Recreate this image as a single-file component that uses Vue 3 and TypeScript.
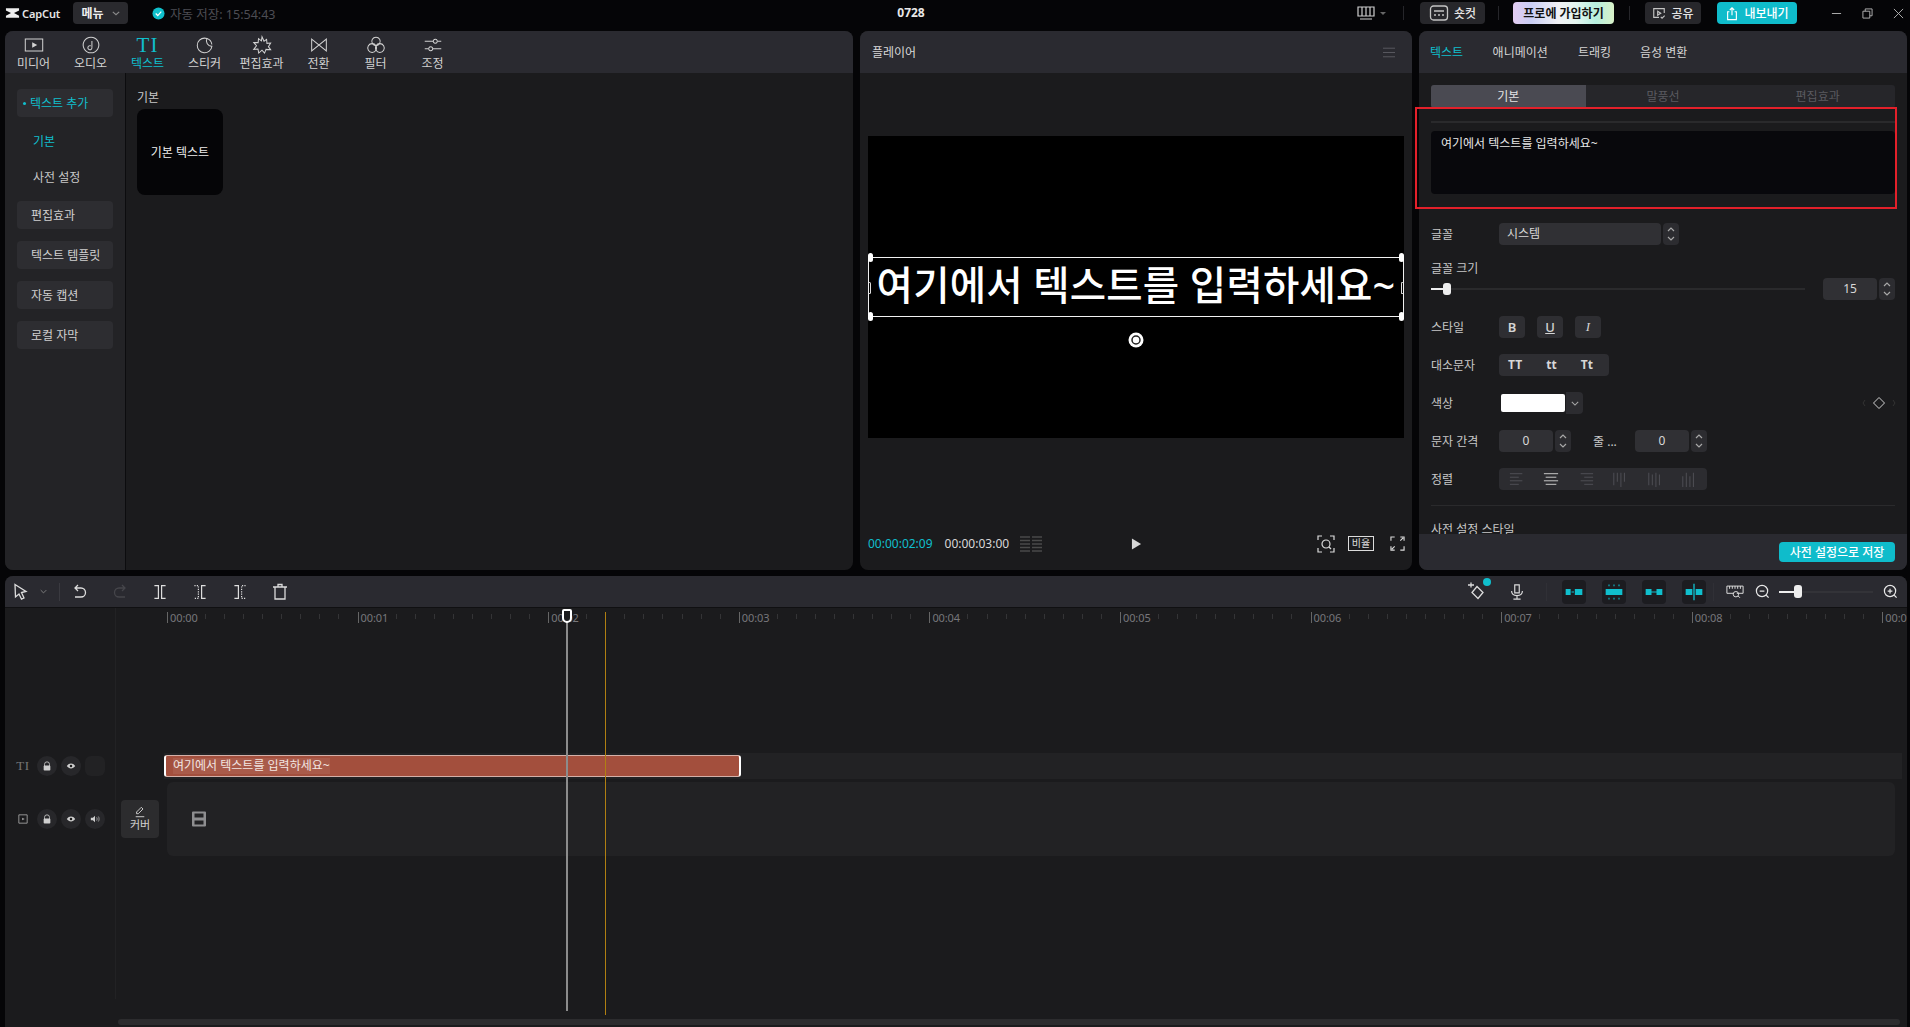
<script setup lang="ts">
interface NavItem { label: string; paths?: string[]; solid?: string[]; active?: boolean; glyph?: string }
const nav: NavItem[] = [
  { label: '미디어', paths: ['M2.5 5.5h19v13h-19z'], solid: ['M10 9l5.5 3-5.5 3z'] },
  { label: '오디오', paths: ['M12 3.5a8.5 8.5 0 1 0 .01 0z', 'M13 7.5v7.5', 'M13 15a2.2 2.2 0 1 1-1.2-2'] },
  { label: '텍스트', glyph: 'TI', active: true },
  { label: '스티커', paths: ['M19.5 13.5a8 8 0 1 1-8-9c1 0 1.8.1 2.6.4a6 6 0 0 0 5.4 8.6z', 'M14.1 4.9c3 1 5 3.6 5.4 6.5'] },
  { label: '편집효과', paths: ['M12 3l2.200 4.800 2.800-2 .4 4.400 4-.4-2.400 4 2.400 3.400-5-.4-1.600 4-2.800-3.200-3.600 3.200-.8-4.400-4.600.4 3-4-3-3.600 4.800.2.400-4.400 3.200 2.400z'] },
  { label: '전환', paths: ['M4 5.5l16 13V5.5l-16 13z'] },
  { label: '필터', paths: ['M12 3.5a4.6 4.6 0 1 0 .01 0z', 'M7.8 10.5a4.8 4.8 0 1 0 .01 0z', 'M16.2 10.5a4.8 4.8 0 1 0 .01 0z'] },
  { label: '조정', paths: ['M3 8h9', 'M17 8h4', 'M14.5 5.8a2.2 2.2 0 1 0 .01 0z', 'M3 16h4', 'M12 16h9', 'M9.5 13.8a2.2 2.2 0 1 0 .01 0z'] },
]
const sideButtons = ['편집효과', '텍스트 템플릿', '자동 캡션', '로컬 자막']
const rightTabs = ['애니메이션', '트래킹', '음성 변환']
const seconds = Array.from({ length: 10 }, (_, i) => `00:0${i}`)
const alignIcons = [
  ['M2 3h14', 'M2 7h10', 'M2 11h14', 'M2 15h10'],
  ['M2 3h16', 'M4 7h12', 'M2 11h16', 'M4 15h12'],
  ['M4 3h14', 'M8 7h10', 'M4 11h14', 'M8 15h10'],
  ['M3 2v14', 'M7 2v10', 'M11 2v16', 'M15 2v10'],
  ['M3 2v14', 'M7 4v12', 'M11 2v16', 'M15 4v12'],
  ['M3 6v12', 'M7 2v16', 'M11 6v12', 'M15 2v16'],
]
const splitIcons = [
  { solid: 'M3 2h5v16H3M17 2h-5v16h5', dash: '' },
  { solid: 'M17 2h-5v16h5', dash: 'M3 2h5v16H3' },
  { solid: 'M3 2h5v16H3', dash: 'M17 2h-5v16h5' },
]
const snapIcons = [
  { fill: ['M2 8.500h6v7H2z', 'M13 8.500h9v7h-9z'], line: ['M9 12h3'] },
  { fill: ['M2 8.500h20v7H2z'], line: ['M6 5V3M12 5V3M18 5V3M6 19v2M12 19v2M18 19v2'] },
  { fill: ['M2 8.500h7v7H2z', 'M15 8.500h7v7h-7z'], line: ['M8 12h8'] },
  { fill: ['M2 8.500h8v7H2z', 'M14 8.500h8v7h-8z', 'M11.200 2h1.600v20h-1.600z'], line: [] },
]
</script>

<template>
  <div class="app">
    <header class="topbar">
      <div class="logo">
        <svg class="logo-mark" viewBox="0 0 16 12"><path d="M1 1h14v2.2L9.6 6 15 8.8V11H1V8.8L6.4 6 1 3.2z" /></svg>
        <span>CapCut</span>
      </div>
      <button class="menu-btn"><b>메뉴</b><svg viewBox="0 0 10 6"><path d="M1 1l4 3.5L9 1" /></svg></button>
      <svg class="save-check" viewBox="0 0 14 14"><circle cx="7" cy="7" r="6.5" /><path d="M4 7l2.2 2.2L10 5" /></svg>
      <span class="autosave">자동 저장: 15:54:43</span>
      <span class="project">0728</span>
      <div class="top-right">
        <svg class="kbd" viewBox="0 0 18 14"><path d="M1 1h16v9H1zM5 1v9M9 1v9M13 1v9M3 13h12" /></svg>
        <span class="caret"></span>
        <i class="top-sep first"></i>
        <button class="top-btn shortcut">
          <svg viewBox="0 0 20 18"><rect x="1.5" y="2" width="17" height="14" rx="3" /><path d="M5 7h10M5 11h2M9 11h2M13 11h2" /></svg>
          숏컷
        </button>
        <i class="top-sep tight"></i>
        <button class="top-btn pro">프로에 가입하기</button>
        <i class="top-sep"></i>
        <button class="top-btn share">
          <svg viewBox="0 0 16 16"><path d="M14 8V3H2v10h6" /><path d="M6.5 6l3.5 2.2-3.5 2.2z" /><path d="M10 12.5l1.5 1.5 3-3" /></svg>
          공유
        </button>
        <button class="top-btn export">
          <svg viewBox="0 0 16 16"><path d="M5 6H3v9h10V6h-2" /><path d="M8 10V1.5M5.5 4L8 1.5 10.500 4" /></svg>
          내보내기
        </button>
        <div class="win">
          <svg viewBox="0 0 12 12"><path d="M1 6h10" /></svg>
          <svg viewBox="0 0 12 12"><path d="M1 3.500h7.500V11H1zM3.500 3.500V1H11v7.500H8.500" /></svg>
          <svg viewBox="0 0 12 12"><path d="M1 1l10 10M11 1L1 11" /></svg>
        </div>
      </div>
    </header>

    <main class="work">
      <section class="panel media-panel">
        <nav class="nav">
          <div v-for="n in nav" :key="n.label" class="nav-item" :class="{ active: n.active }">
            <span v-if="n.glyph" class="nav-glyph">{{ n.glyph }}</span>
            <svg v-else class="nav-icon" viewBox="0 0 24 24">
              <path v-for="d in n.paths" :key="d" :d="d" />
              <path v-for="d in n.solid" :key="d" :d="d" class="solid" />
            </svg>
            <span class="nav-label">{{ n.label }}</span>
          </div>
        </nav>
        <div class="media-body">
          <aside class="side">
            <div class="side-btn current"><i></i>텍스트 추가</div>
            <div class="side-link on">기본</div>
            <div class="side-link">사전 설정</div>
            <div class="side-stack">
              <div v-for="b in sideButtons" :key="b" class="side-btn">{{ b }}</div>
            </div>
          </aside>
          <div class="library">
            <div class="lib-title">기본</div>
            <div class="text-card">기본 텍스트</div>
          </div>
        </div>
      </section>

      <section class="panel player">
        <div class="player-head">
          <span>플레이어</span>
          <svg viewBox="0 0 14 12"><path d="M0 1h14M0 6h14M0 11h14" /></svg>
        </div>
        <div class="player-stage">
          <div class="video">
            <div class="selbox">
              <span class="sel-text">여기에서 텍스트를 입력하세요~</span>
              <i class="h tl"></i><i class="h tr"></i><i class="h bl"></i><i class="h br"></i>
              <i class="h ml"></i><i class="h mr"></i>
            </div>
            <svg class="rotate" viewBox="0 0 16 16"><circle cx="8" cy="8" r="7.500" fill="#fff" /><circle cx="8" cy="8" r="4" fill="none" stroke="#222" stroke-width="1.500" /><circle cx="8" cy="8" r="1.500" fill="#fff" /></svg>
          </div>
        </div>
        <div class="player-foot">
          <span class="t-cur">00:00:02:09</span>
          <span class="t-dur">00:00:03:00</span>
          <svg class="meter" viewBox="0 0 22 16"><path d="M0 1h10M12 1h10M0 4.500h10M12 4.500h10M0 8h10M12 8h10M0 11.500h10M12 11.500h10M0 15h10M12 15h10" /></svg>
          <svg class="play" viewBox="0 0 12 14"><path d="M1 1l10 6-10 6z" /></svg>
          <svg class="foot-ic focus" viewBox="0 0 18 18"><path d="M1 5V1h4M13 1h4v4M17 13v4h-4M5 17H1v-4" /><circle cx="9" cy="9" r="4" /><path d="M12 12l2 2" /></svg>
          <span class="ratio">비율</span>
          <svg class="foot-ic full" viewBox="0 0 16 16"><path d="M1 5V1h4M11 1h4v4M15 11v4h-4M5 15H1v-4M11 5l3-3M5 11l-3 3" /></svg>
        </div>
      </section>

      <section class="panel props">
        <div class="prop-tabs">
          <span class="on">텍스트</span>
          <span v-for="t in rightTabs" :key="t">{{ t }}</span>
        </div>
        <div class="prop-scroll">
          <div class="subtabs">
            <span class="sel">기본</span><span>말풍선</span><span>편집효과</span>
          </div>
          <div class="rule"></div>
          <div class="textarea">여기에서 텍스트를 입력하세요~</div>
          <div class="rows">
            <div class="row">
              <label>글꼴</label>
              <div class="select">시스템</div>
              <span class="spin"><svg viewBox="0 0 10 16"><path d="M2 5l3-3 3 3M2 11l3 3 3-3" /></svg></span>
            </div>
            <div class="size-block">
              <label>글꼴 크기</label>
              <div class="row">
                <div class="slider"><i class="fill"></i><i class="thumb"></i></div>
                <div class="num wide">15</div>
                <span class="spin"><svg viewBox="0 0 10 16"><path d="M2 5l3-3 3 3M2 11l3 3 3-3" /></svg></span>
              </div>
            </div>
            <div class="row">
              <label>스타일</label>
              <div class="styles">
                <span class="sq bold">B</span><span class="sq under">U</span><span class="sq ital">I</span>
              </div>
            </div>
            <div class="row">
              <label>대소문자</label>
              <div class="cases"><span>TT</span><span>tt</span><span>Tt</span></div>
            </div>
            <div class="row">
              <label>색상</label>
              <div class="swatch"></div>
              <span class="drop"><svg viewBox="0 0 10 6"><path d="M1 1l4 4 4-4" /></svg></span>
              <svg class="key" viewBox="0 0 34 14"><path d="M3 4L1 7l2 3M31 4l2 3-2 3" class="dim" /><path d="M17 1.500L22.500 7 17 12.500 11.500 7z" /></svg>
            </div>
            <div class="row">
              <label>문자 간격</label>
              <div class="num">0</div>
              <span class="spin"><svg viewBox="0 0 10 16"><path d="M2 5l3-3 3 3M2 11l3 3 3-3" /></svg></span>
              <label class="short">줄 ...</label>
              <div class="num">0</div>
              <span class="spin"><svg viewBox="0 0 10 16"><path d="M2 5l3-3 3 3M2 11l3 3 3-3" /></svg></span>
            </div>
            <div class="row">
              <label>정렬</label>
              <div class="aligns">
                <svg v-for="(a, i) in alignIcons" :key="i" :class="{ on: i === 1 }" viewBox="0 0 20 18">
                  <path v-for="d in a" :key="d" :d="d" />
                </svg>
              </div>
            </div>
          </div>
          <div class="divider"></div>
          <div class="preset-title">사전 설정 스타일</div>
        </div>
        <div class="prop-foot"><button>사전 설정으로 저장</button></div>
      </section>
      <div class="highlight"></div>
    </main>

    <section class="timeline">
      <div class="tl-bar">
        <svg class="tool cursor" viewBox="0 0 16 18"><path d="M2 1.500l11 7-4.500 1 2.500 5.500-2.500 1.200L6 11l-3.500 3z" /></svg>
        <svg class="tiny" viewBox="0 0 10 6"><path d="M1 1l4 4 4-4" /></svg>
        <i class="bar-sep"></i>
        <svg class="tool" viewBox="0 0 16 18"><path d="M6 2L3 5l3 3M3 5h6a4.500 4.500 0 0 1 0 9H3" /></svg>
        <svg class="tool dim-ic" viewBox="0 0 16 18"><path d="M10 2l3 3-3 3M13 5H7a4.500 4.500 0 0 0 0 9h6" /></svg>
        <svg v-for="(s, i) in splitIcons" :key="i" class="tool split" viewBox="0 0 20 20">
          <path :d="s.solid" />
          <path v-if="s.dash" :d="s.dash" class="dash" />
        </svg>
        <svg class="tool" viewBox="0 0 16 18"><path d="M3 4h10v12H3zM1 4h14M6 4V1.500h4V4" /></svg>
        <div class="bar-right">
          <span class="ai">
            <svg viewBox="0 0 20 20"><path d="M11 4.500l6 6-5 6-6-6zM2 3h6M5 0.500v5" /></svg>
            <i></i>
          </span>
          <svg class="tool mic" viewBox="0 0 16 20"><path d="M5.500 2h5v9h-5zM2 9c0 3 2 5 6 5s6-2 6-5M8 14v4M4 18h8" /></svg>
          <i class="bar-sep wide left"></i>
          <div class="snaps">
            <span v-for="(s, i) in snapIcons" :key="i" class="snap">
              <svg viewBox="0 0 24 24">
                <path v-for="d in s.fill" :key="d" :d="d" class="sf" />
                <path v-for="d in s.line" :key="d" :d="d" class="sl" />
              </svg>
            </span>
          </div>
          <i class="bar-sep wide right"></i>
          <svg class="tool ruler-ic" viewBox="0 0 20 16"><path d="M1 2h18v8H12M1 2v8h7M4 2v3M7 2v3M10 2v3M13 2v3M16 2v3" /><circle cx="11" cy="11" r="3" /><path d="M13.500 13l2 2" /></svg>
          <svg class="zoomc" viewBox="0 0 16 16"><circle cx="7.500" cy="7.500" r="6" /><path d="M5 7.500h5M12 12l2.500 2.500" /></svg>
          <div class="zoom-track"><i class="zfill"></i><i class="zthumb"></i></div>
          <svg class="zoomc" viewBox="0 0 16 16"><circle cx="7.500" cy="7.500" r="6" /><path d="M5 7.500h5M7.500 5v5M12 12l2.500 2.500" /></svg>
        </div>
      </div>
      <div class="ruler">
        <div v-for="s in seconds" :key="s" class="sec">
          <span class="sec-label">{{ s }}</span>
          <i v-for="n in 8" :key="n" class="tick"></i>
        </div>
      </div>
      <div class="tracks">
        <div class="track text-track">
          <div class="head">
            <span class="tt">TI</span>
            <span class="hb"><svg viewBox="0 0 12 12"><path d="M3 6V4a3 3 0 0 1 6 0v2" fill="none" stroke="#cfcfcf" /><rect x="2" y="5.500" width="8" height="6" rx="1" /></svg></span>
            <span class="hb"><svg viewBox="0 0 12 12"><path d="M1 6c2.500-4 7.500-4 10 0-2.500 4-7.500 4-10 0z" /><circle cx="6" cy="6" r="1.500" fill="#1c1c1c" /></svg></span>
            <span class="hb ghost"></span>
          </div>
          <div class="lane">
            <div class="clip"><span>여기에서 텍스트를 입력하세요~</span></div>
          </div>
        </div>
        <div class="track video-track">
          <div class="head">
            <span class="vi"><svg viewBox="0 0 12 12"><path d="M1 1h10v10H1z" fill="none" stroke="#aaa" /><path d="M5 4.500l3 1.500-3 1.500z" /></svg></span>
            <span class="hb"><svg viewBox="0 0 12 12"><path d="M3 6V4a3 3 0 0 1 6 0v2" fill="none" stroke="#cfcfcf" /><rect x="2" y="5.500" width="8" height="6" rx="1" /></svg></span>
            <span class="hb"><svg viewBox="0 0 12 12"><path d="M1 6c2.500-4 7.500-4 10 0-2.500 4-7.500 4-10 0z" /><circle cx="6" cy="6" r="1.500" fill="#1c1c1c" /></svg></span>
            <span class="hb"><svg viewBox="0 0 12 12"><path d="M1 4.500h2.500L6 2v8L3.500 7.500H1z" /><path d="M8 4c.7 1 .7 3 0 4M10 3c1.200 1.500 1.200 4.500 0 6" fill="none" stroke="#cfcfcf" stroke-width=".8" /></svg></span>
          </div>
          <div class="cover-col">
            <div class="cover">
              <svg viewBox="0 0 14 14"><path d="M8.500 1.500l2 2L5 9H3V7zM2 12.500h10" /></svg>
              <span>커버</span>
            </div>
          </div>
          <div class="video-lane">
            <svg viewBox="0 0 14 16"><path d="M0 1.500a1 1 0 0 1 1-1h12a1 1 0 0 1 1 1v13a1 1 0 0 1-1 1H1a1 1 0 0 1-1-1zM2.500 2.500v4h9v-4zM2.500 9.500v4h9v-4z" fill-rule="evenodd" /></svg>
          </div>
        </div>
      </div>
      <div class="hscroll"></div>
      <div class="head-divider"></div>
      <div class="orange"></div>
      <div class="playhead"><i></i></div>
    </section>
  </div>
</template>

<style scoped>
.app {
  position: relative;
  width: 1910px;
  height: 1027px;
  overflow: hidden;
  background: #050507;
  color: #d8d8d8;
  font-family: "Noto Sans", "Noto Sans CJK KR", sans-serif;
  font-size: 12px;
  display: flex;
  flex-direction: column;
}
svg { display: block; }
button { font: inherit; border: 0; color: inherit; }

/* top bar */
.topbar { height: 31px; flex: none; display: flex; align-items: center; padding-left: 5px; position: relative; }
.logo { display: flex; align-items: center; gap: 2px; width: 68px; color: #e6e6e6; font-weight: 600; font-size: 11px; letter-spacing: -.1px; margin-top: -5px; }
.logo-mark { width: 15px; height: 12px; fill: #eee; }
.menu-btn { width: 55px; height: 22px; border-radius: 4px; background: #2a2a2e; display: flex; align-items: center; justify-content: center; gap: 8px; margin-top: -5px; color: #eee; }
.menu-btn b { font-weight: 700; }
.menu-btn svg { width: 8px; height: 5px; fill: none; stroke: #8a8a8a; stroke-width: 1.500; }
.save-check { width: 13px; height: 13px; margin: -5px 0 0 24px; }
.save-check circle { fill: #0fc0cc; }
.save-check path { fill: none; stroke: #fff; stroke-width: 1.300; }
.autosave { margin: -5px 0 0 5px; color: #4d4d54; font-size: 12.500px; }
.project { position: absolute; left: 0; width: 1822px; top: 5px; text-align: center; font-weight: 700; color: #e8e8e8; line-height: 16px; pointer-events: none; }
.top-right { margin-left: auto; display: flex; align-items: center; margin-top: -5px; }
.kbd { width: 18px; height: 14px; fill: none; stroke: #cfcfcf; stroke-width: 1.200; }
.caret { width: 0; height: 0; border: 3.500px solid transparent; border-top-color: #666; border-bottom-width: 0; margin-left: 5px; }
.top-sep { width: 1px; height: 14px; background: #26262a; margin: 0 15px; }
.top-sep.first { margin: 0 16px 0 17px; }
.top-sep.tight { margin: 0 14px 0 13px; }
.top-btn { height: 22px; border-radius: 4px; display: flex; align-items: center; justify-content: center; gap: 5px; background: #27272b; font-weight: 500; color: #e4e4e4; font-size: 12px; padding: 0; }
.top-btn svg { fill: none; stroke: #c4c4c4; stroke-width: 1.300; }
.shortcut { width: 65px; }
.shortcut svg { width: 20px; height: 18px; }
.pro { width: 101px; background: linear-gradient(90deg, #e4cdf2 0%, #c9cef4 18%, #f1f1f4 45%, #e5f5ef 62%, #b6efdf 82%, #d9f2c8 100%); color: #111; font-weight: 600; }
.share { width: 56px; }
.share svg { width: 14px; height: 14px; }
.export { width: 80px; margin-left: 16px; background: #0fbccb; color: #fff; }
.export svg { width: 14px; height: 15px; stroke: #fff; }
.win { display: flex; gap: 20px; margin: 0 6px 0 34px; }
.win svg { width: 11px; height: 11px; fill: none; stroke: #b8b8b8; stroke-width: 1; }

/* main row */
.work { position: relative; height: 539px; flex: none; display: flex; gap: 7px; padding-left: 5px; }
.panel { background: #1b1b1d; border-radius: 8px; overflow: hidden; display: flex; flex-direction: column; }
.media-panel { width: 848px; }
.player { width: 552px; }
.props { width: 488px; }

.nav { height: 42px; flex: none; background: #2a2a30; display: flex; }
.nav-item { width: 57px; display: flex; flex-direction: column; align-items: center; color: #d2d2d2; padding-top: 3px; }
.nav-item.active { color: #10bfcd; }
.nav-icon { width: 22px; height: 22px; fill: none; stroke: currentColor; stroke-width: 1.100; }
.nav-icon .solid { fill: currentColor; stroke: none; }
.nav-glyph { height: 22px; line-height: 22px; font-family: "Liberation Serif", serif; font-size: 21px; letter-spacing: 1px; }
.nav-label { line-height: 14px; margin-top: 1px; }
.media-body { flex: 1; display: flex; min-height: 0; }
.side { width: 121px; flex: none; background: #232326; border-right: 1px solid #0c0c0e; padding: 16px 0 0 12px; box-sizing: border-box; }
.side-btn { width: 96px; height: 28px; border-radius: 4px; background: #2d2d31; display: flex; align-items: center; padding-left: 14px; box-sizing: border-box; color: #d0d0d0; white-space: nowrap; }
.side-btn.current { color: #10bfcd; padding-left: 6px; }
.side-btn.current i { width: 3px; height: 3px; border-radius: 50%; background: #10bfcd; margin-right: 4px; }
.side-link { height: 36px; line-height: 36px; padding-left: 16px; color: #c8c8c8; }
.side-link.on { color: #10bfcd; margin-top: 7px; }
.side-stack { display: flex; flex-direction: column; gap: 12px; margin-top: 5px; }
.library { padding: 14px 0 0 11px; }
.lib-title { line-height: 22px; color: #c8c8c8; }
.text-card { width: 86px; height: 86px; background: #050507; border-radius: 8px; display: flex; align-items: center; justify-content: center; color: #eee; }

.player-head { height: 42px; flex: none; background: #2a2a30; display: flex; align-items: center; justify-content: space-between; padding: 0 17px 0 12px; color: #d8d8d8; }
.player-head svg { width: 12px; height: 11px; fill: none; stroke: #5f5f66; stroke-width: 1; }
.player-stage { padding-top: 63px; flex: none; }
.video { position: relative; width: 536px; height: 302px; margin-left: 8px; background: #000; }
.selbox { position: absolute; left: 0; right: 0; top: 121px; height: 60px; box-sizing: border-box; border: 1px solid #f1f1f1; display: flex; align-items: center; justify-content: center; }
.sel-text { color: #fff; font-size: 39.500px; font-weight: 500; white-space: nowrap; line-height: 58px; letter-spacing: .2px; margin-top: -4px; }
.h { position: absolute; width: 5px; height: 9px; border-radius: 3px; background: #fff; }
.tl { left: -1px; top: -5px; } .tr { right: -1px; top: -5px; }
.bl { left: -1px; bottom: -5px; } .br { right: -1px; bottom: -5px; }
.ml { left: -1px; top: 24px; height: 10px; background: transparent; border: 1px solid #ddd; border-left: 0; width: 2px; }
.mr { right: -1px; top: 24px; height: 10px; background: transparent; border: 1px solid #ddd; border-right: 0; width: 2px; }
.rotate { position: absolute; left: 260px; top: 196px; width: 16px; height: 16px; }
.player-foot { flex: 1; display: flex; align-items: center; padding: 79px 8px 0; }
.t-cur { color: #10bfcd; font-size: 12px; }
.t-dur { margin-left: 12px; color: #d8d8d8; font-size: 12px; }
.meter { width: 22px; height: 16px; margin-left: 11px; fill: none; stroke: #4a4a4a; stroke-width: 1.400; }
.play { width: 11px; height: 14px; fill: #d8d8d8; margin-left: 89px; }
.foot-ic { fill: none; stroke: #dcdcdc; stroke-width: 1.200; }
.focus { width: 18px; height: 18px; margin-left: auto; }
.ratio { margin-left: 13px; width: 26px; height: 15px; box-sizing: border-box; border: 1px solid #dcdcdc; font-size: 10px; line-height: 13px; text-align: center; color: #dcdcdc; }
.full { width: 15px; height: 15px; margin: 0 -1px 0 16px; }

.prop-tabs { height: 42px; flex: none; background: #2a2a30; display: flex; align-items: center; padding-left: 11px; color: #d4d4d4; }
.prop-tabs span { flex: none; white-space: nowrap; }
.prop-tabs span:nth-child(1) { width: 62.600px; }
.prop-tabs span:nth-child(2) { width: 85.400px; }
.prop-tabs span:nth-child(3) { width: 62px; }
.prop-tabs .on { color: #10bfcd; }
.prop-scroll { flex: 1; min-height: 0; overflow: hidden; padding: 12px 12px 0; }
.subtabs { height: 23px; display: grid; grid-template-columns: repeat(3, 1fr); background: #26262a; border-radius: 3px; overflow: hidden; text-align: center; line-height: 23px; color: #5a5a60; }
.subtabs .sel { background: #4a4a52; color: #e4e4e4; }
.rule { height: 2px; background: #2a2a2c; margin-top: 13px; }
.textarea { height: 63px; margin-top: 8px; background: #08080c; border-radius: 4px; box-sizing: border-box; padding: 4px 10px; font-size: 12px; line-height: 18px; color: #e6e6e6; }
.rows { margin-top: 29px; display: flex; flex-direction: column; gap: 16px; }
.row { height: 22px; display: flex; align-items: center; }
.row label { width: 68px; flex: none; color: #c8c8c8; }
.select { width: 162px; height: 22px; background: #303034; border-radius: 4px; line-height: 22px; padding-left: 8px; box-sizing: border-box; color: #d8d8d8; }
.spin { width: 16px; height: 22px; margin-left: 2px; background: #2c2c30; border-radius: 4px; display: flex; align-items: center; justify-content: center; flex: none; }
.spin svg { width: 10px; height: 16px; fill: none; stroke: #a8a8a8; stroke-width: 1.200; }
.size-block label { display: block; line-height: 16px; height: 17px; color: #c8c8c8; }
.slider { position: relative; width: 374px; height: 2px; background: #2a2a2c; margin-right: 18px; }
.fill { position: absolute; left: 0; top: 0; width: 14px; height: 2px; background: #eee; }
.thumb { position: absolute; left: 12px; top: -5px; width: 8px; height: 12px; border-radius: 3px; background: #eee; }
.num { width: 54px; height: 22px; background: #303034; border-radius: 4px; text-align: center; line-height: 22px; color: #d8d8d8; }
.styles { display: flex; gap: 12px; }
.sq { width: 26px; height: 22px; background: #2e2e32; border-radius: 4px; text-align: center; line-height: 22px; color: #d4d4d4; font-size: 13px; }
.bold { font-weight: 600; }
.under { text-decoration: underline; font-weight: 500; }
.ital { font-family: "Liberation Serif", serif; font-style: italic; }
.cases { width: 110px; height: 22px; display: flex; background: #2e2e32; border-radius: 4px; font-weight: 700; color: #d8d8d8; justify-content: space-between; padding: 0 16px 0 9px; box-sizing: border-box; line-height: 22px; }
.swatch { width: 64px; height: 18px; background: #fff; border-radius: 2px; margin-left: 2px; }
.drop { width: 17px; height: 22px; margin-left: 1px; background: #2c2c30; border-radius: 0 4px 4px 0; display: flex; align-items: center; justify-content: center; }
.drop svg { width: 8px; height: 5px; fill: none; stroke: #a8a8a8; stroke-width: 1.300; }
.key { width: 34px; height: 14px; margin-left: auto; margin-right: -1px; fill: none; stroke: #d0d0d0; stroke-width: 1; }
.key .dim { stroke: #333; }
.row label.short { width: 42px; margin-left: 22px; }
.aligns { width: 208px; height: 22px; background: #2c2c30; border-radius: 4px; display: flex; align-items: center; justify-content: space-between; padding: 0 9px; box-sizing: border-box; }
.aligns svg { width: 18px; height: 16px; fill: none; stroke: #4c4c52; stroke-width: 1.200; }
.aligns svg.on { stroke: #bcbcbc; }
.divider { height: 1px; background: #2a2a2c; margin-top: 15px; }
.preset-title { margin-top: 16px; color: #c8c8c8; line-height: 16px; }
.prop-foot { height: 36px; flex: none; background: #2a2a30; display: flex; align-items: center; justify-content: flex-end; padding-right: 12px; }
.prop-foot button { width: 116px; height: 20px; border-radius: 4px; background: #0fbccb; color: #fff; font-weight: 500; padding: 0; white-space: nowrap; }
.highlight { position: absolute; left: 1415px; top: 76px; width: 482px; height: 102px; box-sizing: border-box; border: 2px solid #e3202a; pointer-events: none; }

/* timeline */
.timeline { position: relative; height: 451px; margin: 6px 3px 0 5px; background: #1b1b1d; border-radius: 8px 8px 0 0; overflow: hidden; display: flex; flex-direction: column; flex: none; }
.tl-bar { height: 32px; flex: none; background: #2a2a30; display: flex; align-items: center; padding-left: 8px; border-bottom: 1px solid #101012; box-sizing: border-box; }
.tool { width: 16px; height: 18px; fill: none; stroke: #dcdcdc; stroke-width: 1.300; flex: none; margin-right: 24px; }
.split { stroke-width: 1.500; }
.split .dash { stroke-dasharray: 1.500 1.500; }
.cursor { margin-right: 11px; }
.tiny { width: 7px; height: 5px; fill: none; stroke: #8a8a8a; stroke-width: 1.200; }
.bar-sep { width: 1px; height: 18px; background: #3a3a40; margin: 0 12px 0 12px; }
.dim-ic { stroke: #45454a; }
.bar-right { margin-left: auto; display: flex; align-items: center; padding-right: 9px; }
.ai { position: relative; width: 20px; height: 20px; margin-right: 23px; }
.ai svg { width: 20px; height: 20px; fill: none; stroke: #dcdcdc; stroke-width: 1.300; }
.ai i { position: absolute; right: -5px; top: -4px; width: 8px; height: 8px; border-radius: 50%; background: #10bfcd; }
.mic { margin-right: 0; }
.bar-sep.wide { background: #303036; }
.bar-sep.left { margin: 0 15px 0 21px; }
.bar-sep.right { margin: 0 12px 0 7px; }
.snaps { display: flex; gap: 16px; }
.snap { width: 24px; height: 24px; background: #1c1c20; border-radius: 4px; display: flex; align-items: center; justify-content: center; }
.snap svg { width: 20px; height: 20px; }
.sf { fill: #10bfcd; }
.sl { fill: none; stroke: #10bfcd; stroke-width: 1.300; }
.ruler-ic { width: 18px; height: 15px; margin-right: 11px; stroke-width: 1.100; }
.zoomc { width: 15px; height: 15px; fill: none; stroke: #e8e8e8; stroke-width: 1.300; flex: none; }
.zoom-track { position: relative; width: 94px; height: 2px; background: #333338; margin: 0 10px 0 9px; }
.zfill { position: absolute; left: 0; top: 0; width: 20px; height: 2px; background: #eee; }
.zthumb { position: absolute; left: 15px; top: -6px; width: 8px; height: 13px; border-radius: 3px; background: #eee; }

.ruler { height: 20px; flex: none; display: flex; padding-left: 162px; }
.sec { width: 190.600px; flex: none; display: grid; grid-template-columns: repeat(10, 19.060px); align-items: start; }
.sec-label { grid-column: span 2; border-left: 1px solid #666; margin-top: 4px; padding-left: 2px; height: 11px; line-height: 11px; font-size: 11px; color: #77777b; letter-spacing: -.1px; }
.tick { width: 1px; height: 5px; margin-top: 6px; background: #343436; }

.tracks { padding-top: 125px; display: flex; flex-direction: column; gap: 3px; }
.track { display: flex; }
.head { width: 110px; flex: none; display: flex; align-items: center; padding-left: 8px; box-sizing: border-box; gap: 4px; }
.tt { width: 20px; text-align: center; font-family: "Liberation Serif", serif; font-size: 13px; letter-spacing: .5px; color: #777; }
.vi { width: 20px; display: flex; justify-content: center; }
.vi svg { width: 10px; height: 10px; fill: #aaa; }
.hb { width: 20px; height: 20px; border-radius: 50%; background: #27272a; display: flex; align-items: center; justify-content: center; }
.hb svg { width: 10px; height: 10px; fill: #cfcfcf; }
.ghost { background: #222224; border-radius: 6px; }
.text-track { height: 26px; }
.lane { flex: 1; margin: 0 5px 0 49px; background: #222224; display: flex; align-items: center; }
.clip { width: 577px; height: 22px; box-sizing: border-box; background: #a34f3d; border: 1px solid #d4b0a8; border-left: 2px solid #fff; border-right: 2px solid #fff; border-radius: 3px; display: flex; align-items: center; padding-left: 7px; overflow: hidden; }
.clip span { color: #f2e6e2; font-size: 12px; line-height: 16px; margin-top: -1px; background: rgba(255, 255, 255, .07); white-space: nowrap; }
.video-track { height: 74px; }
.cover-col { width: 52px; flex: none; display: flex; align-items: center; padding-left: 6px; box-sizing: border-box; }
.cover { width: 38px; height: 38px; border-radius: 4px; background: #2c2c2e; display: flex; flex-direction: column; align-items: center; justify-content: center; color: #d0d0d0; font-size: 11px; line-height: 14px; }
.cover svg { width: 12px; height: 12px; fill: none; stroke: #d0d0d0; stroke-width: 1.100; }
.video-lane { flex: 1; margin-right: 12px; background: #222224; border-radius: 6px; display: flex; align-items: center; padding-left: 25px; }
.video-lane svg { width: 14px; height: 16px; fill: #8e8e90; }
.hscroll { height: 6px; margin: auto 7px 2px 113px; background: #2c2c2e; border-radius: 3px; flex: none; }
.head-divider { position: absolute; left: 110px; top: 32px; bottom: 28px; width: 1px; background: #222224; }
.orange { position: absolute; left: 600px; top: 36px; width: 1px; height: 403px; background: #b07f12; }
.playhead { position: absolute; left: 562px; top: 33px; width: 1px; height: 402px; }
.playhead::after { content: ""; position: absolute; left: -1px; top: 0; width: 2px; height: 100%; background: #8c8c8c; }
.playhead i { position: absolute; left: -5px; top: 0; z-index: 1; width: 10px; height: 14px; box-sizing: border-box; border: 2px solid #fff; background: #1b1b1d; border-radius: 2px 2px 5px 5px; }
</style>
<style>
html, body { margin: 0; background: #050507; }
</style>
